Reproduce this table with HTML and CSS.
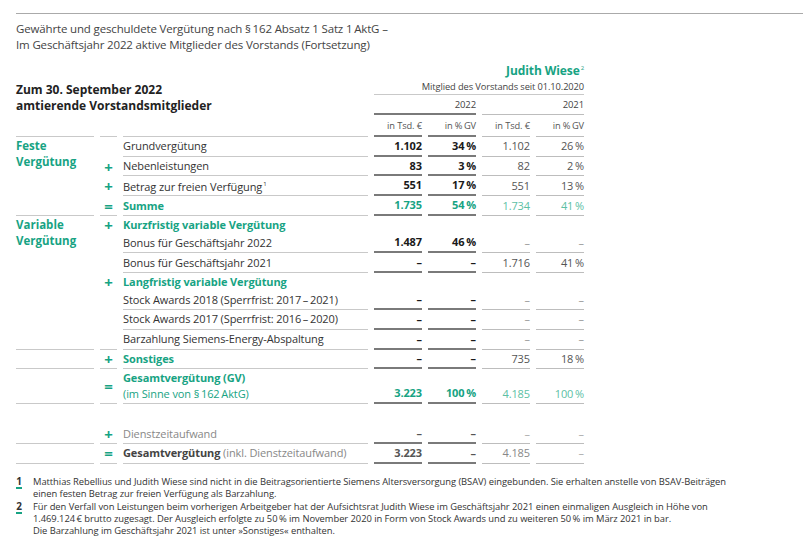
FILE: index.html
```html
<!DOCTYPE html>
<html lang="de">
<head>
<meta charset="utf-8">
<title>Vergütung Vorstand</title>
<link rel="stylesheet" href="styles.css">
</head>
<body>
<div class="page">
  <div class="rule"></div>
  <p class="title">Gewährte und geschuldete Vergütung nach §&#8201;162 Absatz 1 Satz 1&#8201;AktG –<br>Im Geschäftsjahr 2022 aktive Mitglieder des Vorstands (Fortsetzung)</p>

  <table class="comp">
    <colgroup>
      <col class="w-cat"><col class="w-sign"><col class="w-label">
      <col class="w-val"><col class="w-val"><col class="w-val"><col class="w-val">
    </colgroup>
    <thead>
      <tr class="h-name">
        <td colspan="3"></td>
        <td colspan="4" class="name">Judith Wiese<sup>2</sup></td>
      </tr>
      <tr class="h-since">
        <td colspan="3" rowspan="2" class="heading"><span class="hl">Zum 30. September 2022</span><span class="hl">amtierende Vorstandsmitglieder</span></td>
        <td colspan="4" class="since">Mitglied des Vorstands seit 01.10.2020</td>
      </tr>
      <tr class="h-year">
        <td colspan="2" class="year c">2022</td>
        <td colspan="2" class="year p">2021</td>
      </tr>
      <tr class="h-unit">
        <td class="b"></td><td class="b"></td><td class="b"></td>
        <td class="unit c">in Tsd. €</td><td class="unit c">in %&#8201;GV</td>
        <td class="unit p">in Tsd. €</td><td class="unit p">in %&#8201;GV</td>
      </tr>
    </thead>
    <tbody>
      <tr class="row">
        <td rowspan="4" class="cat b">Feste<br>Vergütung</td>
        <td class="sign"></td>
        <td class="label b">Grundvergütung</td>
        <td class="v c">1.102</td><td class="v c">34&#8201;%</td>
        <td class="v p">1.102</td><td class="v p">26&#8201;%</td>
      </tr>
      <tr class="row">
        <td class="sign">+</td>
        <td class="label b">Nebenleistungen</td>
        <td class="v c">83</td><td class="v c">3&#8201;%</td>
        <td class="v p">82</td><td class="v p">2&#8201;%</td>
      </tr>
      <tr class="row">
        <td class="sign">+</td>
        <td class="label b">Betrag zur freien Verfügung<sup>1</sup></td>
        <td class="v c">551</td><td class="v c">17&#8201;%</td>
        <td class="v p">551</td><td class="v p">13&#8201;%</td>
      </tr>
      <tr class="row green">
        <td class="sign b">=</td>
        <td class="label b strong">Summe</td>
        <td class="v c">1.735</td><td class="v c">54&#8201;%</td>
        <td class="v p">1.734</td><td class="v p">41&#8201;%</td>
      </tr>

      <tr class="row sub">
        <td rowspan="7" class="cat b">Variable<br>Vergütung</td>
        <td class="sign">+</td>
        <td class="label strong green">Kurzfristig variable Vergütung</td>
        <td></td><td></td><td></td><td></td>
      </tr>
      <tr class="row">
        <td class="sign"></td>
        <td class="label b">Bonus für Geschäftsjahr 2022</td>
        <td class="v c">1.487</td><td class="v c">46&#8201;%</td>
        <td class="v p dash">–</td><td class="v p dash">–</td>
      </tr>
      <tr class="row">
        <td class="sign"></td>
        <td class="label b">Bonus für Geschäftsjahr 2021</td>
        <td class="v c">–</td><td class="v c">–</td>
        <td class="v p">1.716</td><td class="v p">41&#8201;%</td>
      </tr>
      <tr class="row sub">
        <td class="sign">+</td>
        <td class="label strong green">Langfristig variable Vergütung</td>
        <td></td><td></td><td></td><td></td>
      </tr>
      <tr class="row">
        <td class="sign"></td>
        <td class="label b">Stock Awards 2018 (Sperrfrist: 2017&#8201;–&#8201;2021)</td>
        <td class="v c">–</td><td class="v c">–</td>
        <td class="v p dash">–</td><td class="v p dash">–</td>
      </tr>
      <tr class="row">
        <td class="sign"></td>
        <td class="label b">Stock Awards 2017 (Sperrfrist: 2016&#8201;–&#8201;2020)</td>
        <td class="v c">–</td><td class="v c">–</td>
        <td class="v p dash">–</td><td class="v p dash">–</td>
      </tr>
      <tr class="row">
        <td class="sign b"></td>
        <td class="label b">Barzahlung Siemens-Energy-Abspaltung</td>
        <td class="v c">–</td><td class="v c">–</td>
        <td class="v p dash">–</td><td class="v p dash">–</td>
      </tr>

      <tr class="row">
        <td class="b"></td>
        <td class="sign b">+</td>
        <td class="label b strong green">Sonstiges</td>
        <td class="v c">–</td><td class="v c">–</td>
        <td class="v p">735</td><td class="v p">18&#8201;%</td>
      </tr>
      <tr class="row total green">
        <td class="b"></td>
        <td class="sign b">=</td>
        <td class="label b"><span class="strong">Gesamtvergütung (GV)</span><br>(im Sinne von §&#8201;162&#8201;AktG)</td>
        <td class="v c">3.223</td><td class="v c">100&#8201;%</td>
        <td class="v p">4.185</td><td class="v p">100&#8201;%</td>
      </tr>

      <tr class="spacer"><td colspan="7"></td></tr>

      <tr class="row muted">
        <td class="b"></td>
        <td class="sign b">+</td>
        <td class="label b">Dienstzeitaufwand</td>
        <td class="v c">–</td><td class="v c">–</td>
        <td class="v p dash">–</td><td class="v p dash">–</td>
      </tr>
      <tr class="row muted">
        <td class="b"></td>
        <td class="sign b">=</td>
        <td class="label b"><span class="strong dark">Gesamtvergütung</span> (inkl. Dienstzeitaufwand)</td>
        <td class="v c">3.223</td><td class="v c">–</td>
        <td class="v p">4.185</td><td class="v p dash">–</td>
      </tr>
    </tbody>
  </table>

  <ol class="notes">
    <li><span class="num">1</span><span class="txt">Matthias Rebellius und Judith Wiese sind nicht in die Beitragsorientierte Siemens Altersversorgung (BSAV) eingebunden. Sie erhalten anstelle von BSAV-Beiträgen<br>einen festen Betrag zur freien Verfügung als Barzahlung.</span></li>
    <li><span class="num">2</span><span class="txt">Für den Verfall von Leistungen beim vorherigen Arbeitgeber hat der Aufsichtsrat Judith Wiese im Geschäftsjahr 2021 einen einmaligen Ausgleich in Höhe von<br>1.469.124&#8201;€ brutto zugesagt. Der Ausgleich erfolgte zu 50&#8201;% im November 2020 in Form von Stock Awards und zu weiteren 50&#8201;% im März 2021 in bar.<br>Die Barzahlung im Geschäftsjahr 2021 ist unter »Sonstiges« enthalten.</span></li>
  </ol>
</div>
</body>
</html>
```

FILE: styles.css
```css
html, body {
  margin: 0;
  padding: 0;
  background: #fff;
}

body {
  font-family: "Open Sans", "Noto Sans", sans-serif;
  color: #333;
}

.page {
  padding: 13px 0 0 16px;
}

.rule {
  width: 787px;
  border-top: 1.5px solid #aaa;
}

.title {
  margin: 7px 0 0;
  font-size: 11.5px;
  line-height: 16px;
  color: #444;
  letter-spacing: -0.15px;
}

/* ---- table ---- */
.comp {
  margin: 9px 0 0 -6px;
  border-collapse: separate;
  border-spacing: 6px 0;
  table-layout: fixed;
  font-size: 11px;
  letter-spacing: -0.1px;
}

.w-cat { width: 78px; }
.w-sign { width: 17px; }
.w-label { width: 245px; }
.w-val { width: 48px; }

.comp td {
  padding: 0;
  white-space: nowrap;
}

.b { border-bottom: 1px solid #c9c9c9; }
td.c { border-bottom: 2px solid #7a7a7a; }
td.p { border-bottom: 1px solid #bdbdbd; }

/* header */
.h-name td { height: 17px; }
.name {
  text-align: right;
  color: #17a383;
  font-weight: 700;
  font-size: 12px;
  vertical-align: middle;
}
.name sup {
  font-size: 6px;
  font-weight: 400;
  vertical-align: 5px;
  margin-left: 1px;
}
.h-since td { height: 15px; }
.since {
  text-align: right;
  font-size: 9.3px;
  color: #444;
  border-bottom: 1px solid #c9c9c9;
  vertical-align: middle;
}
.heading {
  vertical-align: top;
  padding-top: 3px !important;
  font-weight: 700;
  font-size: 12px;
  color: #222;
  letter-spacing: 0;
}
.hl {
  display: block;
  height: 16.4px;
  line-height: 16.4px;
}
.h-year td { height: 18px; }
.year {
  text-align: right;
  font-size: 9.5px;
  color: #444;
  vertical-align: middle;
}
.h-unit td { height: 20px; }
.unit {
  text-align: right;
  font-size: 9.3px;
  color: #555;
  vertical-align: middle;
}

/* body rows */
.row td {
  height: 17.7px;
  vertical-align: middle;
  line-height: 16px;
}
.row.sub td { height: 17.5px; }

.cat {
  vertical-align: top !important;
  padding-top: 1px !important;
  color: #17a383;
  font-weight: 700;
  font-size: 11.5px;
  line-height: 16px !important;
  letter-spacing: 0;
}

.sign {
  text-align: center;
  color: #17a383;
  font-weight: 700;
  font-size: 15px;
}

.label { color: #333; }
.label sup {
  font-size: 6px;
  vertical-align: 5px;
  margin-left: 1px;
}
.strong { font-weight: 700; }
.green, .green .label { color: #17a383; }

.v { text-align: right; }
.v.c { font-weight: 700; color: #1a1a1a; }
.v.p { color: #555; }
.v.p.dash { color: #999; }

.green .v.c { color: #17a383; }
.green .v.p { color: #5cc0a4; }

.total td { height: 32px; }
.total .v { vertical-align: bottom; padding-bottom: 1px; }
.total .label { vertical-align: top; padding-top: 1px; }

.spacer td { height: 20px; }

.muted .label { color: #888; }
.muted .label .dark { color: #444; }
.muted .v.c { color: #555; }
.muted .v.p { color: #888; }
.muted .v.p.dash { color: #aaa; }

/* footnotes */
.notes {
  list-style: none;
  margin: 12px 0 0;
  padding: 0;
  font-size: 9.4px;
  line-height: 12.2px;
  color: #333;
  letter-spacing: -0.05px;
}
.notes li {
  display: flex;
  margin-bottom: 1px;
}
.num {
  flex: 0 0 auto;
  width: 6px;
  margin-right: 11px;
  font-weight: 700;
  font-size: 10px;
  text-align: center;
  border-bottom: 2px solid #17a383;
  height: 11px;
  line-height: 11px;
}
.txt { flex: 1 1 auto; white-space: nowrap; }
```
